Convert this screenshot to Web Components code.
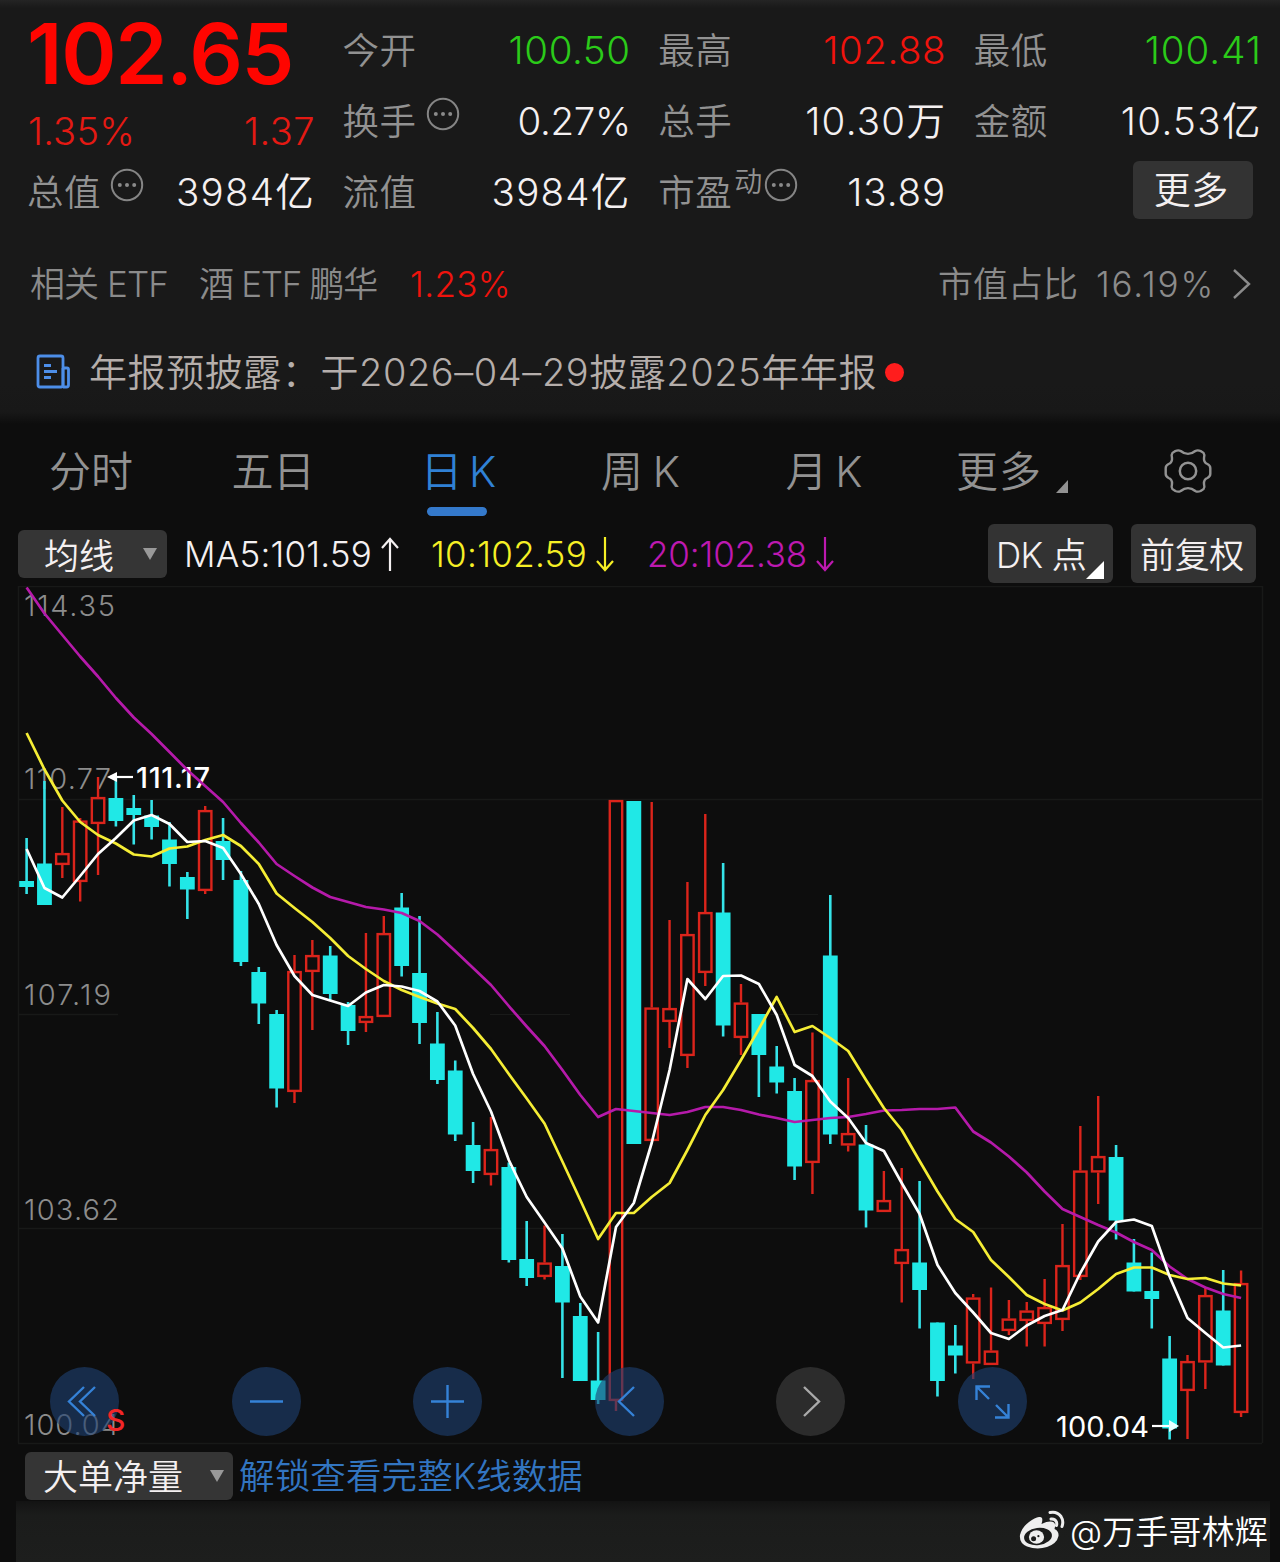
<!DOCTYPE html>
<html lang="zh-CN">
<head>
<meta charset="utf-8">
<meta name="viewport" content="width=device-width, initial-scale=1">
<title>日K</title>
<style>
  body {
    margin: 0;
    background: #0d0d0d;
    color: #f4f0f1;
    font-family: Inter, "Noto Sans CJK SC", sans-serif;
    font-weight: 350;
  }
</style>
</head>
<body>
<stock-page></stock-page>

<script>
// A run of text spaced out to a given width
class FitText extends HTMLElement {
  constructor() {
    super()
    this.attachShadow({ mode: "open" })
    this.shadowRoot.innerHTML = `
      <style>
        :host { display: block; flex: none; white-space: nowrap; line-height: 1.2; }
        span { display: inline-block; }
      </style>
      <span><slot></slot></span>
    `
  }

  connectedCallback() {
    const span = this.shadowRoot.querySelector("span")
    const target = Number(this.getAttribute("width"))
    if (!target) return
    const count = [...this.textContent].length
    const spacing = (target - span.getBoundingClientRect().width) / count
    span.style.letterSpacing = spacing.toFixed(3) + "px"
    this.style.width = target + "px"
  }
}

class MoreDots extends HTMLElement {
  constructor() {
    super()
    this.attachShadow({ mode: "open" })
    this.shadowRoot.innerHTML = `
      <style>
        :host { display: block; width: 34px; height: 34px; flex: none; }
        svg { display: block; }
      </style>
      <svg width="34" height="34" fill="#8a8a8a">
        <circle cx="17" cy="17" r="15.2" fill="none" stroke="#858585" stroke-width="2" />
        <circle cx="9.8" cy="17" r="2" /><circle cx="17" cy="17" r="2" /><circle cx="24.2" cy="17" r="2" />
      </svg>
    `
  }
}

// One label / value pair of the quote header
class QuoteCell extends HTMLElement {
  constructor() {
    super()
    this.attachShadow({ mode: "open" })
    const label = this.getAttribute("label")
    const sup = this.getAttribute("sup")
    const width = this.getAttribute("label-width") || 74
    this.shadowRoot.innerHTML = `
      <style>
        :host { display: flex; height: 71px; align-items: center; justify-content: space-between; font-size: 38.5px; }
        .label { display: flex; align-items: center; margin: 2px 0 0 -2px; color: #929292; font-size: 36.5px; font-weight: 350; }
        .sup { font-size: 28px; margin: -22px 0 0 2px; }
        more-dots { margin: -17px 0 0 9px; }
        .sup + more-dots { margin-left: 2px; }
        .value { color: var(--tone, #f4f0f1); }
      </style>
      <div class="label">
        <fit-text width="${width}">${label}</fit-text>
        ${sup ? `<fit-text class="sup" width="28">${sup}</fit-text>` : ""}
        ${this.hasAttribute("dots") ? "<more-dots></more-dots>" : ""}
      </div>
      <fit-text class="value" width="${this.getAttribute("width")}">${this.getAttribute("value")}</fit-text>
    `
  }
}

class QuoteHeader extends HTMLElement {
  constructor() {
    super()
    this.attachShadow({ mode: "open" })
    this.shadowRoot.innerHTML = `
      <style>
        :host {
          display: block;
          height: 424px;
          box-sizing: border-box;
          padding: 15px 18px 0 29px;
          background: linear-gradient(#242424, #191919 8px, #191919 385px, #181818 412px, #0d0d0d);
        }
        .grid { display: grid; grid-template-columns: repeat(4, 286px); column-gap: 29.6px; height: 213px; }
        .price { color: #ff0500; font-size: 84px; font-weight: 560; height: 78px; }
        .price fit-text { line-height: 78px; margin-left: -2px; }
        .change { display: flex; justify-content: space-between; align-items: center; height: 76px; padding-top: 1px; box-sizing: border-box; color: #e51913; font-size: 38px; }
        .change fit-text:first-child { margin-left: -1px; }
        .grid quote-cell.total { height: 47px; }
        .red { --tone: #f0130d; }
        .green { --tone: #2bcb19; }
        .more { display: flex; height: 71px; align-items: center; justify-content: flex-end; }
        button {
          display: flex; align-items: center; justify-content: center; box-sizing: border-box;
          width: 120px; height: 58px; margin: -6px 9px 0 0; padding: 3px 3px 0 0;
          border: 0; border-radius: 6px; background: #333; color: #f4f0f1;
          font: inherit; font-size: 37px;
        }
        .etf { display: flex; align-items: center; height: 72px; margin-top: 20px; padding-left: 1px; font-size: 35px; color: #8b8b8b; }
        .etf .name { margin-left: 31px; }
        .etf .rate { margin-left: 33px; color: #f0130d; }
        .etf .ratio { margin-left: auto; margin-right: 18px; }
        .etf svg { margin: 0 10px 0 17px; }
        .notice { display: flex; align-items: center; height: 60px; margin-top: 22px; padding-left: 7px; font-size: 38px; color: #b5aeab; }
        .notice fit-text { margin: 2px 0 0 18px; }
        .notice i { width: 19px; height: 19px; border-radius: 50%; background: #ff1d1d; margin-left: 8px; }
      </style>
      <div class="grid">
        <div>
          <div class="price"><fit-text width="266">102.65</fit-text></div>
          <div class="change"><fit-text width="107">1.35%</fit-text><fit-text width="71">1.37</fit-text></div>
          <quote-cell class="total" label="总值" dots value="3984亿" width="139"></quote-cell>
        </div>
        <div>
          <quote-cell class="green" label="今开" value="100.50" width="122"></quote-cell>
          <quote-cell label="换手" dots value="0.27%" width="113"></quote-cell>
          <quote-cell label="流值" value="3984亿" width="139"></quote-cell>
        </div>
        <div>
          <quote-cell class="red" label="最高" value="102.88" width="123"></quote-cell>
          <quote-cell label="总手" value="10.30万" width="141"></quote-cell>
          <quote-cell label="市盈" sup="动" dots value="13.89" width="99"></quote-cell>
        </div>
        <div>
          <quote-cell class="green" label="最低" value="100.41" width="117"></quote-cell>
          <quote-cell label="金额" value="10.53亿" width="141"></quote-cell>
          <div class="more"><button><fit-text width="75">更多</fit-text></button></div>
        </div>
      </div>
      <div class="etf">
        <fit-text width="138">相关 ETF</fit-text>
        <fit-text class="name" width="178">酒 ETF 鹏华</fit-text>
        <fit-text class="rate" width="101">1.23%</fit-text>
        <fit-text class="ratio" width="140">市值占比</fit-text>
        <fit-text width="119">16.19%</fit-text>
        <svg width="20" height="32" fill="none" stroke="#8b8b8b" stroke-width="2.4"><path d="M2 2 17 16 2 30" /></svg>
      </div>
      <div class="notice">
        <svg width="35" height="36" fill="none" stroke="#4d8ee8" stroke-width="2.8" stroke-linejoin="round">
          <rect x="2" y="2" width="25" height="31" rx="2" />
          <path d="M27 14H31Q32.500 14 32.500 15.500V31Q32.500 33 30.500 33H27M27 14V33M8 11.500h7M8 17.500h13M8 23.500h7" />
        </svg>
        <fit-text width="788">年报预披露：于2026–04–29披露2025年年报</fit-text>
        <i></i>
      </div>
    `
  }
}

class PeriodTabs extends HTMLElement {
  constructor() {
    super()
    this.attachShadow({ mode: "open" })
    const tabs = [["分时", 84], ["五日", 83], ["日 K", 73], ["周 K", 78], ["月 K", 75], ["更多", 86]]
    this.shadowRoot.innerHTML = `
      <style>
        :host { display: grid; grid-template-columns: 182px 182px 186px 180px 186px 180px 184px; height: 98px; color: #929292; font-size: 42px; }
        .tab { display: flex; flex-direction: column; align-items: center; padding-top: 23px; height: 75px; }
        .tab.active { color: #3081d5; }
        .active::after { content: ""; width: 60px; height: 9px; border-radius: 5px; background: #3479cb; margin-top: 10px; }
        .more { display: flex; align-items: flex-end; gap: 14px; padding-left: 12px; }
        .more i { border-left: 12px solid transparent; border-bottom: 13px solid #929292; margin-bottom: 4px; }
        .gear { padding-top: 22px; }
      </style>
      ${tabs.map(([name, width], i) => `
        <div class="tab ${i === 2 ? "active" : ""}">
          ${i === 5
            ? `<div class="more"><fit-text width="${width}">${name}</fit-text><i></i></div>`
            : `<fit-text width="${width}">${name}</fit-text>`}
        </div>`).join("")}
      <div class="tab gear">
        <svg width="50" height="50" viewBox="-25 -25 50 50" fill="none" stroke="#929292" stroke-width="2.5" stroke-linejoin="round">
          <circle r="8.2" />
          <path transform="scale(.97 .93)" d="M-13-21.500Q-10-23-7.500-21.500-4-18.500 0-18.500T7.500-21.500Q10-23 13-21.500L16-19.500Q17.500-17.500 16.500-14 16-9 20-7.500 23-6 23-3V3Q23 6 20 7.500 16 9 16.500 14 17.500 17.500 16 19.500L13 21.500Q10 23 7.500 21.500 4 18.500 0 18.500T-7.500 21.500Q-10 23-13 21.500L-16 19.500Q-17.500 17.500-16.500 14-16 9-20 7.500-23 6-23 3V-3Q-23-6-20-7.500-16-9-16.500-14-17.500-17.500-16-19.500Z" />
        </svg>
      </div>
    `
  }
}

class DropButton extends HTMLElement {
  constructor() {
    super()
    this.attachShadow({ mode: "open" })
    this.shadowRoot.innerHTML = `
      <style>
        :host { display: flex; align-items: center; justify-content: space-between; box-sizing: border-box; height: 48px; flex: none; background: #353535; border-radius: 6px; font-size: 35px; }
        div { padding-top: 3px; }
        i { border: 7px solid transparent; border-top: 12px solid #999; border-bottom: 0; }
      </style>
      <div><slot></slot></div><i></i>
    `
  }
}

class MaBar extends HTMLElement {
  constructor() {
    super()
    this.attachShadow({ mode: "open" })
    const up = "M10 34V2M2 11 10 2 18 11"
    const down = "M10 0V32M2 24 10 33 18 24"
    const arrow = (d) => `<svg width="20" height="35" fill="none" stroke="currentColor" stroke-width="2.2"><path d="${d}" /></svg>`
    this.shadowRoot.innerHTML = `
      <style>
        :host { display: flex; align-items: center; height: 64px; padding: 0 24px 0 18px; font-size: 35px; }
        drop-button { width: 149px; padding: 0 10px 0 26px; margin-right: 17px; }
        .ma { display: flex; align-items: center; color: var(--tone); }
        .ma svg { margin-left: 8px; }
        .ten { --tone: #f6ef25; margin-left: 31px; }
        .twenty { --tone: #bd19b0; margin-left: 32px; }
        .box { display: flex; align-items: center; height: 59px; box-sizing: border-box; border-radius: 6px; background: #333; margin-top: -1px; }
        .box fit-text { margin-top: 3px; }
        .dk { width: 125px; padding-left: 8px; margin-left: auto; }
        .dk i { border-left: 18px solid transparent; border-bottom: 18px solid #fff; margin-top: 32px; }
        .right { width: 125px; justify-content: center; margin-left: 18px; }
        .right fit-text { margin-left: -3px; }
      </style>
      <drop-button><fit-text width="70">均线</fit-text></drop-button>
      <div class="ma"><fit-text width="188">MA5:101.59</fit-text>${arrow(up)}</div>
      <div class="ma ten"><fit-text width="156">10:102.59</fit-text>${arrow(down)}</div>
      <div class="ma twenty"><fit-text width="160">20:102.38</fit-text>${arrow(down)}</div>
      <div class="box dk"><fit-text width="90">DK 点</fit-text><i></i></div>
      <div class="box right"><fit-text width="104">前复权</fit-text></div>
    `
  }
}

// [kind, high, body top, body bottom, low], kind "r" rises and "c" falls
const CANDLES = [
  ["c", 838, 881, 887, 894], ["c", 781, 863.5, 905, 905], ["r", 807, 853, 865, 878], ["r", 818, 820.5, 882, 901.5],
  ["r", 777, 797, 824, 875], ["c", 777, 798, 821, 826.5], ["c", 795, 808, 815, 844.5], ["c", 800, 815.5, 827, 839.5],
  ["c", 822, 839.5, 864, 886.5], ["c", 872, 877, 889.5, 919], ["r", 806, 810, 891, 894], ["c", 818, 841, 860, 880],
  ["c", 871, 880, 962, 966], ["c", 967, 972, 1003.5, 1024], ["c", 1010, 1014, 1088.5, 1107.5], ["r", 955, 971, 1092, 1103],
  ["r", 940, 955, 972, 1030], ["c", 946, 955.5, 994, 1000], ["c", 1002, 1005, 1031, 1045], ["r", 933, 1016, 1023, 1032],
  ["r", 916, 933, 1017, 1017], ["c", 893, 907.5, 966, 976.5], ["c", 916, 973, 1023, 1044], ["c", 1012, 1043.5, 1080, 1084],
  ["c", 1060.5, 1070.5, 1134.5, 1141], ["c", 1122, 1145, 1171, 1183], ["r", 1117, 1149, 1175, 1185.5], ["c", 1162.5, 1167, 1260, 1262.5],
  ["c", 1221, 1259, 1278, 1286], ["r", 1225.5, 1262.5, 1277, 1279.5], ["c", 1234, 1266, 1302.5, 1378], ["c", 1303, 1316, 1381, 1381],
  ["c", 1332, 1380.5, 1400, 1404], ["r", 800, 800, 1401, 1411], ["c", 801, 801, 1144, 1144], ["r", 802, 1007.5, 1141, 1141],
  ["r", 920, 1008, 1022, 1048], ["r", 882, 934, 1056, 1068], ["r", 814, 912, 973, 986], ["c", 863, 912.5, 1025.5, 1036.5],
  ["r", 984, 1002.5, 1038, 1055], ["c", 1014, 1014, 1055, 1097], ["c", 1046, 1066.5, 1082.5, 1093.5], ["c", 1078, 1091, 1166.5, 1180],
  ["r", 1032.5, 1080, 1163, 1194], ["c", 895, 955.5, 1134.5, 1144], ["r", 1078, 1133, 1145.5, 1151.5], ["c", 1125, 1144.5, 1210.5, 1227.5],
  ["r", 1171, 1200, 1212, 1212], ["r", 1168, 1249, 1264, 1302.5], ["c", 1181, 1262.5, 1290, 1328.5], ["c", 1322.5, 1322.5, 1381, 1396.5],
  ["c", 1325, 1345.5, 1355.5, 1373.5], ["r", 1294, 1297.5, 1363.5, 1379], ["r", 1287.5, 1350.5, 1365, 1365], ["r", 1300, 1318.5, 1331, 1335],
  ["r", 1302, 1310.5, 1321, 1346.5], ["r", 1279, 1307, 1324, 1346.5], ["r", 1224, 1265, 1320, 1331], ["r", 1126, 1170.5, 1277, 1280],
  ["r", 1096, 1156, 1172.5, 1204], ["c", 1145, 1157, 1220.5, 1239.5], ["c", 1239, 1262.5, 1291.5, 1291.5], ["c", 1252.5, 1291, 1299, 1328.5],
  ["c", 1336, 1358.5, 1428.5, 1439.5], ["r", 1355, 1361, 1391, 1439], ["r", 1288, 1295, 1362.5, 1389], ["c", 1270, 1310.5, 1365.5, 1365.5],
  ["r", 1270.5, 1283, 1413, 1417]
]

const MA5 = [849, 888, 897.5, 876, 854, 838, 820.5, 815, 824, 842, 841, 848, 874, 904, 945, 976, 995, 1000.5, 1006, 992.5, 985, 986.5, 991, 1001.5, 1025.5, 1074, 1111.5, 1160, 1197, 1222.5, 1248.5, 1296.5, 1322.5, 1227, 1203, 1143, 1070, 979, 999, 976, 975.5, 984, 1015, 1065, 1076, 1101.5, 1118, 1143, 1151, 1183, 1214, 1265, 1293, 1312.5, 1333, 1339, 1325.5, 1316, 1310, 1273, 1241.5, 1222, 1219.5, 1226, 1276.5, 1318, 1333, 1347.5, 1345.5]
const MA10 = [733, 769.5, 800.5, 822, 835, 843.5, 854.5, 856.5, 848.5, 846.5, 840, 835, 846, 864, 893.5, 908, 922, 938, 956, 969, 981, 990, 997, 1003.5, 1009, 1028, 1049, 1074, 1098.5, 1123.5, 1161.5, 1200, 1239, 1213, 1213, 1197, 1183, 1150, 1115, 1090, 1060, 1029, 997, 1032, 1026, 1038, 1051, 1080, 1108, 1130, 1161, 1191.5, 1219, 1232, 1260, 1277, 1295, 1304, 1310.5, 1302.5, 1289, 1274, 1267.5, 1267.5, 1275, 1279, 1278, 1283.5, 1285.5]
const MA20 = [587.5, 613.5, 635, 656.5, 676.5, 698, 717.5, 734, 752, 770, 786, 802, 823, 842.5, 864, 876, 887.5, 897, 902, 907, 909.5, 913, 921, 934.5, 951, 968, 985, 1006, 1026.5, 1046, 1070, 1095, 1117, 1109, 1111, 1113, 1115, 1112, 1107, 1107, 1110, 1114.5, 1118, 1122, 1120, 1118, 1117, 1114, 1110.5, 1110, 1109, 1109, 1107.5, 1131.5, 1142.5, 1156.5, 1172.5, 1191.5, 1209, 1217, 1225, 1232.5, 1242, 1250, 1266.5, 1279, 1287.5, 1294, 1298]

const candleX = (i) => 26.6 + i * 17.86

class KlineChart extends HTMLElement {
  constructor() {
    super()
    this.attachShadow({ mode: "open" })
    this.shadowRoot.innerHTML = `
      <style>
        :host { display: block; position: relative; height: 864px; }
        svg { display: block; }
        .axis { fill: #8c8c8c; font-size: 29px; font-weight: 300; }
        .mark { fill: #fff; font-size: 29px; font-weight: 400; }
        .mark.high { font-weight: 550; }
        .tools { position: absolute; left: 50px; right: 253px; bottom: 14px; display: flex; justify-content: space-between; }
        .tool { width: 69px; height: 69px; border-radius: 50%; background: rgba(30, 65, 113, .62); }
        .tool.off { background: rgba(62, 62, 62, .65); }
        .sell { position: absolute; left: 106px; top: 818px; color: #f22628; font-size: 30px; font-weight: 550; line-height: 32px; }
      </style>
      <svg width="1280" height="864" viewBox="0 586 1280 864">
        <path d="M18 586.5H1262M18 799.5H1262M18 1014.5H118M18 1228.5H1262M18 1443.5H1262M18.500 586V1443M1262.500 586V1443" stroke="#181918" stroke-width="1.5" fill="none" />
        <path d="M490 1014.5H570M770 1014.5H818" stroke="#191a19" />
        ${this.labels()}
        ${CANDLES.map((c, i) => this.candle(c, i)).join("")}
        ${this.line(MA20, "#b51aaa")}
        ${this.line(MA10, "#f5ed35")}
        ${this.line(MA5, "#fff")}
        <path d="M110 777H133" stroke="#fff" stroke-width="2.2" /><path d="M107 777 117 772V782Z" fill="#fff" />
        <path d="M1152 1426H1170" stroke="#fff" stroke-width="2.2" /><path d="M1179 1426 1169 1420V1432Z" fill="#e8ffff" />
      </svg>
      <div class="tools">${this.tools()}</div>
      <div class="sell">S</div>
    `
  }

  labels() {
    const axis = [["114.35", 616, 91], ["110.77", 789, 87], ["107.19", 1004.5, 87], ["103.62", 1219.5, 95], ["100.04", 1434.5, 95]]
    return axis.map(([text, y, width]) => `<text class="axis" x="24" y="${y}" textLength="${width}">${text}</text>`).join("")
      + `<text class="mark high" x="136" y="788" textLength="74">111.17</text>`
      + `<text class="mark" x="1056" y="1437" textLength="93">100.04</text>`
  }

  candle([kind, high, top, bottom, low], i) {
    const x = candleX(i)
    if (kind === "c") {
      return `<path d="M${x} ${high}V${low}" stroke="#35e3e8" stroke-width="2.6" />
        <rect x="${x - 7.4}" y="${top}" width="14.8" height="${bottom - top}" fill="#20e8e6" />`
    }
    return `<path d="M${x} ${high}V${top}M${x} ${bottom}V${low}" stroke="#db241b" stroke-width="2.4" />
      <rect x="${x - 6.2}" y="${top + 1.1}" width="12.4" height="${Math.max(1, bottom - top - 2.2)}" fill="none" stroke="#db241b" stroke-width="2.4" />`
  }

  line(values, color) {
    const points = values.map((y, i) => `${candleX(i).toFixed(1)},${y}`).join(" ")
    return `<polyline points="${points}" fill="none" stroke="${color}" stroke-width="2.7" stroke-linejoin="round" />`
  }

  tools() {
    const icons = [
      "M34 20 19 34.5 34 49M45 20 30 34.5 45 49",
      "M18 34.5H51",
      "M18 34.5H51M34.5 18V51",
      "M39 20 24 34.5 39 49",
      "M28 20 43 34.5 28 49",
      "M18.500 33V19.500H32M19 20 31 32M50.500 37V50.500H37M50 50 38 38"
    ]
    return icons.map((d, i) => `<div class="tool ${i === 4 ? "off" : ""}">
      <svg width="69" height="69" fill="none" stroke="${i === 4 ? "#aaa" : "#3582d7"}" stroke-width="2.4"><path d="${d}" /></svg>
    </div>`).join("")
  }
}

class ChartFooter extends HTMLElement {
  constructor() {
    super()
    this.attachShadow({ mode: "open" })
    this.shadowRoot.innerHTML = `
      <style>
        :host { display: block; height: 112px; }
        .row { display: flex; align-items: center; height: 51px; padding-left: 25px; }
        drop-button { width: 208px; padding: 0 9px 0 18px; }
        .link { margin: 3px 0 0 6px; color: #3275c1; font-size: 35.5px; }
        .panel {
          display: flex; align-items: center; justify-content: flex-end; height: 61px;
          margin: 0 10px 0 16px; padding-right: 2px; color: #fff; font-size: 33px;
          background: linear-gradient(#131313, #1b1c1b 14px, #1d1e1d);
        }
        .panel svg { margin: -3px 5px 0 0; }
        .panel fit-text { margin-top: 2px; }
      </style>
      <div class="row">
        <drop-button><fit-text width="140">大单净量</fit-text></drop-button>
        <fit-text class="link" width="344">解锁查看完整K线数据</fit-text>
      </div>
      <div class="panel">
        <svg width="46" height="40" viewBox="0 0 46 40">
          <path fill="#eee" d="M20 7Q25 6 22.500 14 31 10 35 12.500 37 14.500 35.500 19 40 21 39.500 26 38 33.500 28 37 18 40 8 36.500 0 33 1 25 3 17 10 12 16 7.500 20 7Z" />
          <ellipse cx="19" cy="26.5" rx="14" ry="8.6" fill="#1b1c1b" transform="rotate(-7 19 26.500)" />
          <ellipse cx="17.5" cy="27" rx="7.6" ry="6.8" fill="#eee" />
          <circle cx="14.6" cy="28.8" r="2.5" fill="#1b1c1b" /><circle cx="19.4" cy="26.2" r="1.1" fill="#1b1c1b" />
          <path fill="none" stroke="#eee" stroke-width="3" stroke-linecap="round" d="M31 2.500Q38 1 42 6.500 45 11 43 16.500M32 9Q36 8.500 37.500 12 38 14 37.500 15.500" />
        </svg>
        <fit-text width="198">@万手哥林辉</fit-text>
      </div>
    `
  }
}

class StockPage extends HTMLElement {
  constructor() {
    super()
    this.attachShadow({ mode: "open" })
    this.shadowRoot.innerHTML = `
      <style>
        :host { display: block; width: 1280px; height: 1562px; overflow: hidden; }
      </style>
      <quote-header></quote-header>
      <period-tabs></period-tabs>
      <ma-bar></ma-bar>
      <kline-chart></kline-chart>
      <chart-footer></chart-footer>
    `
  }
}

customElements.define("fit-text", FitText)
customElements.define("more-dots", MoreDots)
customElements.define("quote-cell", QuoteCell)
customElements.define("quote-header", QuoteHeader)
customElements.define("period-tabs", PeriodTabs)
customElements.define("drop-button", DropButton)
customElements.define("ma-bar", MaBar)
customElements.define("kline-chart", KlineChart)
customElements.define("chart-footer", ChartFooter)
customElements.define("stock-page", StockPage)
</script>
</body>
</html>
